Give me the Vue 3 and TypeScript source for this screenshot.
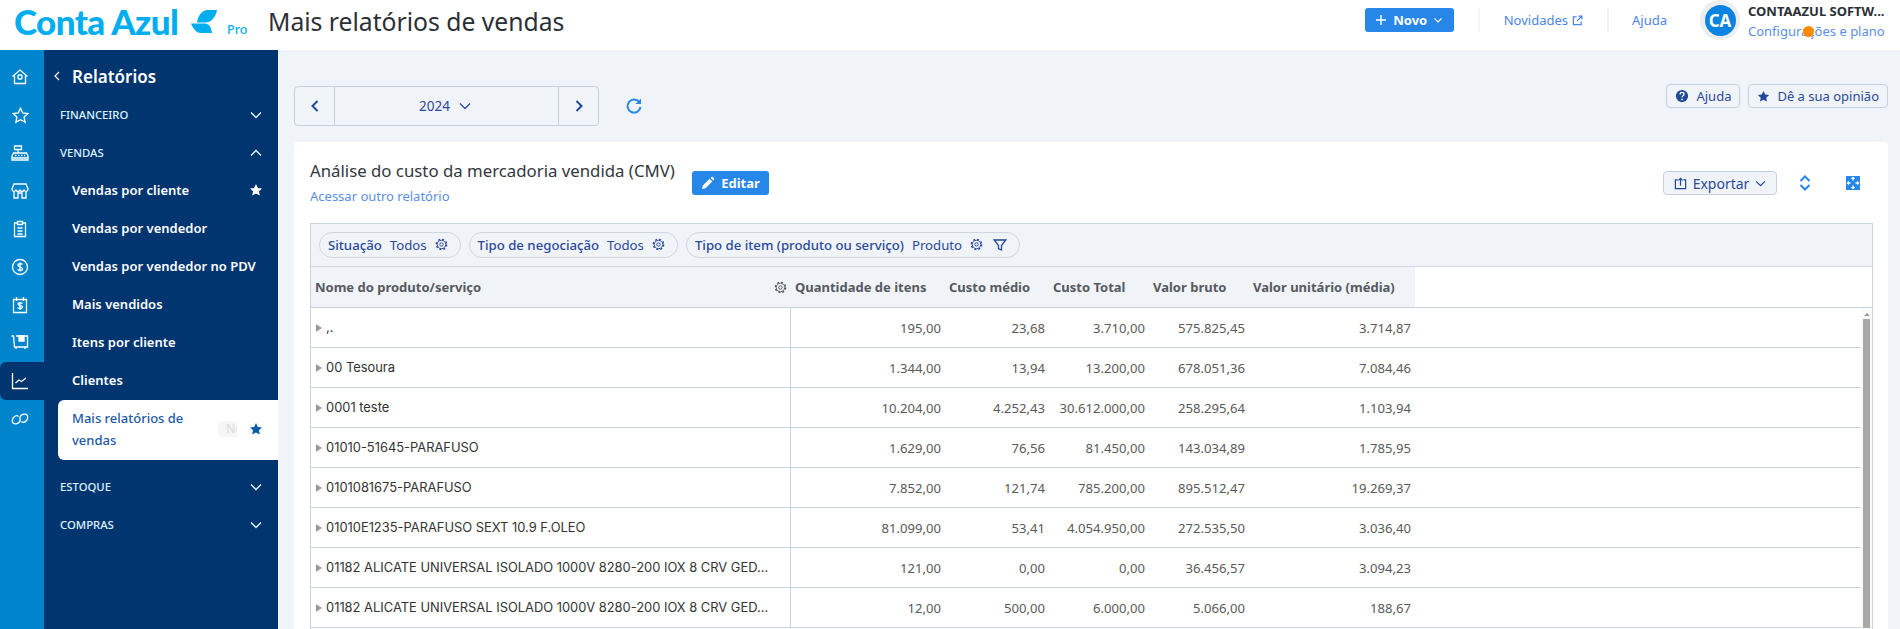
<script setup lang="ts">
import { ref } from 'vue'

interface Row { name: string; qty: string; cost: string; total: string; gross: string; unit: string }
const rows = ref<Row[]>([
  { name: ',.', qty: '195,00', cost: '23,68', total: '3.710,00', gross: '575.825,45', unit: '3.714,87' },
  { name: '00 Tesoura', qty: '1.344,00', cost: '13,94', total: '13.200,00', gross: '678.051,36', unit: '7.084,46' },
  { name: '0001 teste', qty: '10.204,00', cost: '4.252,43', total: '30.612.000,00', gross: '258.295,64', unit: '1.103,94' },
  { name: '01010-51645-PARAFUSO', qty: '1.629,00', cost: '76,56', total: '81.450,00', gross: '143.034,89', unit: '1.785,95' },
  { name: '0101081675-PARAFUSO', qty: '7.852,00', cost: '121,74', total: '785.200,00', gross: '895.512,47', unit: '19.269,37' },
  { name: '01010E1235-PARAFUSO SEXT 10.9 F.OLEO', qty: '81.099,00', cost: '53,41', total: '4.054.950,00', gross: '272.535,50', unit: '3.036,40' },
  { name: '01182 ALICATE UNIVERSAL ISOLADO 1000V 8280-200 IOX 8 CRV GED...', qty: '121,00', cost: '0,00', total: '0,00', gross: '36.456,57', unit: '3.094,23' },
  { name: '01182 ALICATE UNIVERSAL ISOLADO 1000V 8280-200 IOX 8 CRV GED...', qty: '12,00', cost: '500,00', total: '6.000,00', gross: '5.066,00', unit: '188,67' },
])
const subItems = ['Vendas por vendedor', 'Vendas por vendedor no PDV', 'Mais vendidos', 'Itens por cliente', 'Clientes']
const headers = ['Quantidade de itens', 'Custo médio', 'Custo Total', 'Valor bruto', 'Valor unitário (média)']
const star = 'M8 1.2l2.1 4.4 4.8.6-3.5 3.3.9 4.8L8 12l-4.3 2.3.9-4.8L1.1 6.2l4.8-.6z'
</script>

<template>
  <div class="page">
    <svg class="defs" width="0" height="0" aria-hidden="true">
      <symbol id="gear" viewBox="0 0 16 16">
        <circle cx="8" cy="8" r="5.2" fill="none" stroke="currentColor" stroke-width="1.2" />
        <circle cx="8" cy="8" r="2.1" fill="none" stroke="currentColor" stroke-width="1.2" />
        <circle cx="8" cy="8" r="6.4" fill="none" stroke="currentColor" stroke-width="1.6" stroke-dasharray="2.5 2.53" />
      </symbol>
    </svg>
    <header class="topbar">
      <div class="brand">
        <span class="logo-text">Conta Azul</span>
        <svg class="logo-mark" viewBox="0 0 26 24" width="26" height="24">
          <path d="M6 12.5C7 6 10.500 0 17 0h9c-1 6-5 12.500-12 12.500z" fill="#00aeef" />
          <path d="M0 13.500h14c4 0 6 3.500 7 9.500H10C5 23 2 18 0 13.500z" fill="#00aeef" />
        </svg>
        <span class="logo-pro">Pro</span>
      </div>
      <h1 class="page-title">Mais relatórios de vendas</h1>
      <div class="top-actions">
        <button class="btn-new">
          <svg viewBox="0 0 12 12" width="12" height="12"><path d="M6 1v10M1 6h10" stroke="#fff" stroke-width="1.4" fill="none" /></svg>
          <span>Novo</span>
          <svg viewBox="0 0 10 10" width="10" height="10"><path d="M1.500 3.500L5 7l3.500-3.500" stroke="#fff" stroke-width="1.2" fill="none" /></svg>
        </button>
        <i class="vline first"></i>
        <a class="top-link news">Novidades
          <svg viewBox="0 0 12 12" width="11" height="11"><path d="M5 2H1.500v8.500H10V7M7 1.200h3.800V5M10.500 1.500L5.500 6.500" stroke="#4a86e8" stroke-width="1.3" fill="none" /></svg>
        </a>
        <i class="vline second"></i>
        <a class="top-link help">Ajuda</a>
        <div class="avatar"><span>CA</span></div>
        <div class="account">
          <strong>CONTAAZUL SOFTW...</strong>
          <a>Configurações e plano</a>
          <i class="dot"></i>
        </div>
      </div>
    </header>

    <div class="body">
      <nav class="rail">
        <a class="rail-item"><svg viewBox="0 0 20 20" width="20" height="20"><path d="M2.500 9.500L10 3l7.500 6.500M4.500 8.500v8h11v-8" /><rect x="8" y="8" width="4" height="4" rx="1" /></svg></a>
        <a class="rail-item"><svg viewBox="0 0 16 16" width="17" height="17"><path :d="star" /></svg></a>
        <a class="rail-item"><svg viewBox="0 0 20 20" width="20" height="20"><path d="M3.500 10h13l1.500 3v4H2v-4zM4.500 3h7v3.500h-7zM8 6.500V10M5 12.500h1.500M8 12.500h1.500M11 12.500h1.500M14 12.500h1M2 15h16" /></svg></a>
        <a class="rail-item"><svg viewBox="0 0 20 20" width="20" height="20"><path d="M4 3h12l2 5c0 3-3 3-4 1-1 2-3 2-4 0-1 2-3 2-4 0-1 2-4 2-4-1zM4 10.500V17h4v-5h4v5h4v-6.500" /></svg></a>
        <a class="rail-item"><svg viewBox="0 0 20 20" width="20" height="20"><path d="M7.500 4H4.500v13.500h11V4h-3M7.500 2.500h5v3h-5zM7.500 9h5M7.500 12h5M7.500 15h5" /></svg></a>
        <a class="rail-item"><svg viewBox="0 0 20 20" width="20" height="20"><circle cx="10" cy="10" r="7.500" /><path d="M12.500 7.500c-.5-1-4.500-1.500-4.500.800s4.500 1.200 4.500 3.400-4 1.800-5 .6M10 5.500v9" /></svg></a>
        <a class="rail-item"><svg viewBox="0 0 20 20" width="20" height="20"><path d="M3.500 4.500h13v13h-13zM6.500 2v4M13.500 2v4M12.500 8.500c-.5-1-4.500-1.300-4.500.6s4.500 1 4.500 3-4 1.800-5 .6M10 7v8" /></svg></a>
        <a class="rail-item"><svg viewBox="0 0 20 20" width="20" height="20"><path d="M1.500 3h2l1 11h13V3H6M6 14v2M15 14v2" /><path class="solid" d="M9 3h5v5H9z" /></svg></a>
        <a class="rail-item active"><svg viewBox="0 0 20 20" width="20" height="20"><path d="M2.500 2v15.500H18M5.500 12l3.500-3 2.500 1.500 4.500-3.500" /></svg></a>
        <a class="rail-item"><svg viewBox="0 0 20 20" width="20" height="20"><path d="M8.500 7.500c-1-1-3-1-4.500.5s-2.500 4.500-1 6 4.500 1 6-.5 1.500-3 1-4M11.500 12.500c1 1 3 1 4.500-.5s2.500-4.500 1-6-4.500-1-6 .5-1.500 3-1 4" /></svg></a>
      </nav>

      <aside class="menu">
        <div class="menu-title">
          <svg viewBox="0 0 10 14" width="8" height="12"><path d="M7.500 2L2.500 7l5 5" stroke="#fff" stroke-width="1.5" fill="none" /></svg>
          <span>Relatórios</span>
        </div>
        <div class="group"><span>FINANCEIRO</span><svg class="chev" viewBox="0 0 12 8" width="12" height="8"><path d="M1 1.500l5 5 5-5" /></svg></div>
        <div class="group"><span>VENDAS</span><svg class="chev" viewBox="0 0 12 8" width="12" height="8"><path d="M1 6.500l5-5 5 5" /></svg></div>
        <div class="sub">
          <span>Vendas por cliente</span>
          <svg viewBox="0 0 16 16" width="14" height="14"><path :d="star" fill="#fff" /></svg>
        </div>
        <div v-for="item in subItems" :key="item" class="sub"><span>{{ item }}</span></div>
        <div class="sub current">
          <span class="current-label">Mais relatórios de vendas</span>
          <span class="badge"><span>Novo</span></span>
          <svg viewBox="0 0 16 16" width="14" height="14"><path :d="star" fill="#0a5ca8" /></svg>
        </div>
        <div class="group after-current"><span>ESTOQUE</span><svg class="chev" viewBox="0 0 12 8" width="12" height="8"><path d="M1 1.500l5 5 5-5" /></svg></div>
        <div class="group"><span>COMPRAS</span><svg class="chev" viewBox="0 0 12 8" width="12" height="8"><path d="M1 1.500l5 5 5-5" /></svg></div>
      </aside>

      <main class="content">
        <div class="toolbar">
          <div class="date-nav">
            <button class="dn-arrow"><svg viewBox="0 0 10 14" width="10" height="14"><path d="M7.500 2L2.500 7l5 5" /></svg></button>
            <div class="dn-year"><span>2024</span><svg viewBox="0 0 12 8" width="12" height="8"><path d="M1 1.500l5 5 5-5" fill="none" stroke="#2b4a9b" stroke-width="1.3" /></svg></div>
            <button class="dn-arrow"><svg viewBox="0 0 10 14" width="10" height="14"><path d="M2.500 2l5 5-5 5" /></svg></button>
          </div>
          <svg class="refresh" viewBox="0 0 18 18" width="18" height="18"><path d="M14.500 5.500A6.500 6.500 0 1 0 15.500 10" fill="none" stroke="#2687e9" stroke-width="2" /><path d="M16 1.500v5.500h-5.500z" fill="#2687e9" /></svg>
          <div class="tool-right">
            <button class="ghost">
              <svg viewBox="0 0 16 16" width="14" height="14"><circle cx="8" cy="8" r="7" fill="#1f4a9b" /><path d="M5.800 6.200c0-3 4.500-3 4.500-.2 0 1.700-2.300 1.600-2.300 3.500" fill="none" stroke="#fff" stroke-width="1.5" /><circle cx="8" cy="11.800" r="1" fill="#fff" /></svg>
              Ajuda
            </button>
            <button class="ghost">
              <svg viewBox="0 0 16 16" width="13" height="13"><path :d="star" fill="#1f4a9b" /></svg>
              Dê a sua opinião
            </button>
          </div>
        </div>

        <section class="card">
          <div class="card-head">
            <div class="card-titles">
              <h2>Análise do custo da mercadoria vendida (CMV)</h2>
              <a>Acessar outro relatório</a>
            </div>
            <button class="btn-edit">
              <svg viewBox="0 0 14 14" width="14" height="14"><path d="M1 13l.8-3.500L8.600 2.700l2.700 2.700-6.800 6.800zM9.500 1.800l.9-.8a1 1 0 0 1 1.400 0l1.200 1.200a1 1 0 0 1 0 1.400l-.8.9z" fill="#fff" /></svg>
              Editar
            </button>
            <div class="card-tools">
              <button class="ghost export">
                <svg viewBox="0 0 14 14" width="13" height="13"><path d="M4 3H1.500v9.500h11V3H10M7 9.500V1.500M4.800 3.700L7 1.500l2.200 2.200" fill="none" stroke="#1f4a9b" stroke-width="1.3" /></svg>
                Exportar
                <svg viewBox="0 0 12 8" width="11" height="7"><path d="M1 1.500l5 5 5-5" fill="none" stroke="#1f4a9b" stroke-width="1.3" /></svg>
              </button>
              <svg class="sort" viewBox="0 0 12 16" width="12" height="16"><path d="M1.500 6L6 1.500 10.500 6M1.500 10L6 14.500 10.500 10" fill="none" stroke="#2687e9" stroke-width="2" /></svg>
              <svg class="expand" viewBox="0 0 14 14" width="14" height="14"><rect width="14" height="14" fill="#2687e9" /><path d="M7 .5L9.200 3H4.800zM7 13.500L4.800 11h4.400zM.5 7L3 4.800v4.400zM13.500 7L11 9.200V4.800z" fill="#fff" /><path d="M7 3v1.500M7 9.500V11M3 7h1.500M9.500 7H11" stroke="#fff" stroke-width="1.300" /></svg>
            </div>
          </div>

          <div class="table">
            <div class="filters">
              <div class="chip c1">
                <b>Situação</b><span>Todos</span>
                <svg width="13" height="13"><use href="#gear" /></svg>
              </div>
              <div class="chip c2">
                <b>Tipo de negociação</b><span>Todos</span>
                <svg width="13" height="13"><use href="#gear" /></svg>
              </div>
              <div class="chip c3">
                <b>Tipo de item (produto ou serviço)</b><span>Produto</span>
                <svg width="13" height="13"><use href="#gear" /></svg>
                <svg class="funnel" viewBox="0 0 14 14" width="14" height="14"><path d="M1.200 2h11.600L8.500 7.500V12l-3-1.500v-3z" /></svg>
              </div>
            </div>
            <div class="thead">
              <div class="th name">
                <span>Nome do produto/serviço</span>
                <svg width="13" height="13"><use href="#gear" /></svg>
              </div>
              <div v-for="h in headers" :key="h" class="th">{{ h }}</div>
            </div>
            <div class="tbody">
              <div class="rows">
                <div v-for="(r, i) in rows" :key="i" class="tr">
                  <div class="td name"><i class="caret"></i><span>{{ r.name }}</span></div>
                  <div class="td num">{{ r.qty }}</div>
                  <div class="td num">{{ r.cost }}</div>
                  <div class="td num">{{ r.total }}</div>
                  <div class="td num">{{ r.gross }}</div>
                  <div class="td num">{{ r.unit }}</div>
                </div>
              </div>
              <div class="scrollbar"><i class="sb-up"></i><i class="sb-thumb"></i></div>
            </div>
          </div>
        </section>
      </main>
    </div>
  </div>
</template>

<style>
html, body { margin: 0; height: 629px; overflow: hidden; background: #f0f3f8; }
</style>

<style scoped>
* { box-sizing: border-box; }
.defs { position: absolute; }
.page { width: 1900px; height: 629px; overflow: hidden; display: flex; flex-direction: column; font-family: "Noto Sans", sans-serif; }
button { font-family: inherit; cursor: pointer; }
.topbar { height: 50px; flex: none; background: #fff; display: flex; align-items: center; }
.brand { display: flex; align-items: center; width: 268px; height: 24px; margin-top: -7px; padding-left: 14px; flex: none; }
.logo-text { font-family: "Lato", sans-serif; font-weight: 900; font-size: 35px; color: #00aeef; letter-spacing: -0.6px; line-height: 1; white-space: nowrap; width: 167px; flex: none; }
.logo-mark { margin-left: 10px; flex: none; }
.logo-pro { font-size: 12.5px; font-weight: 500; color: #00aeef; margin-left: 10px; margin-top: 16px; }
.page-title { margin: -8px 0 0; font-size: 24.7px; font-weight: 400; color: #2b2f36; white-space: nowrap; }
.top-actions { margin-left: auto; display: flex; align-items: center; height: 50px; padding-right: 12px; }
.btn-new { width: 89px; height: 24px; margin-bottom: 10px; border: 0; border-radius: 3px; background: #2687e9; color: #fff; font-weight: 700; font-size: 13px; display: flex; align-items: center; justify-content: center; gap: 6px; padding: 0; }
.vline { width: 2px; height: 24px; background: #f0f3f8; margin-bottom: 10px; }
.vline.first { margin-left: 24px; }
.vline.second { margin-left: 24px; }
.top-link { color: #4a86e8; font-size: 13px; margin-bottom: 10px; display: flex; align-items: center; gap: 4px; }
.news { margin-left: 24px; }
.help { margin-left: 23px; }
.avatar { width: 40px; height: 40px; margin: 0 8px 10px 33px; border-radius: 50%; background: #eeeeee; display: flex; align-items: center; justify-content: center; }
.avatar span { width: 31px; height: 31px; border-radius: 50%; background: #0a84e0; color: #fff; font-weight: 700; font-size: 17px; display: flex; align-items: center; justify-content: center; }
.account { position: relative; width: 140px; display: flex; flex-direction: column; gap: 2px; margin-bottom: 8px; }
.account strong { font-size: 13px; font-weight: 700; color: #2b2f36; white-space: nowrap; line-height: 18px; }
.account a { font-size: 13px; color: #5b8fe6; line-height: 18px; white-space: nowrap; }
.dot { position: absolute; left: 55px; top: 24px; width: 11px; height: 11px; border-radius: 50%; background: #ff8c00; }
.body { flex: 1; display: flex; min-height: 0; }
.rail { width: 44px; flex: none; background: #0085cc; padding-top: 8px; display: flex; flex-direction: column; }
.rail-item { height: 38px; display: flex; align-items: center; justify-content: center; padding-right: 4px; flex: none; }
.rail-item svg { fill: none; stroke: #fff; stroke-width: 1.3; }
.rail-item svg .solid { fill: #fff; }
.rail-item.active { background: #00356f; border-radius: 6px 0 0 6px; }
.menu { width: 234px; flex: none; background: #00356f; color: #fff; }
.menu-title { height: 46px; display: flex; align-items: center; gap: 11px; padding: 6px 0 0 9px; font-size: 17px; font-weight: 600; }
.group { height: 38px; display: flex; align-items: center; justify-content: space-between; padding: 0 16px 2px; font-size: 11.3px; font-weight: 500; color: #dff4ff; }
.group.after-current { margin-top: 8px; }
.chev { fill: none; stroke: #eaf8ff; stroke-width: 1.3; margin-top: 2px; }
.sub { height: 38px; display: flex; align-items: center; justify-content: space-between; margin-left: 14px; padding: 0 15px 2px 14px; font-size: 13px; font-weight: 600; color: #fff; white-space: nowrap; }
.current { height: 60px; background: #fff; color: #2358a6; border-radius: 6px 0 0 6px; font-weight: 500; justify-content: flex-start; padding-right: 15px; }
.current-label { width: 130px; line-height: 22px; white-space: normal; flex: none; }
.badge { width: 19px; height: 16px; background: #f6f6f6; border-radius: 3px 0 0 3px; overflow: hidden; color: #ddd; font-size: 12px; margin-left: 16px; line-height: 16px; padding-left: 8px; margin-right: 12px; flex: none; }
.content { flex: 1; min-width: 0; padding: 0 12px 0 16px; display: flex; flex-direction: column; }
.toolbar { height: 92px; flex: none; display: flex; align-items: flex-start; }
.date-nav { width: 305px; height: 40px; display: flex; border: 1px solid #c5d0de; border-radius: 4px; background: #f0f3f8; margin-top: 36px; }
.dn-arrow { width: 39px; border: 0; background: transparent; display: flex; align-items: center; justify-content: center; padding: 0; }
.dn-arrow svg { fill: none; stroke: #1f4a9b; stroke-width: 2; }
.dn-year { flex: 1; border-left: 1px solid #c5d0de; border-right: 1px solid #c5d0de; display: flex; align-items: center; justify-content: center; gap: 9px; color: #2b4a9b; font-size: 13.5px; padding-right: 3px; }
.refresh { margin-left: 26px; margin-top: 47px; }
.tool-right { margin-left: auto; display: flex; gap: 8px; margin-top: 34px; }
.ghost { height: 24px; display: flex; align-items: center; gap: 7px; border: 1px solid #c5d0de; border-radius: 4px; background: #f0f3f8; color: #2b4a9b; font-size: 13px; padding: 0 8px; white-space: nowrap; }
.card { flex: 1; background: #fff; border-radius: 4px 4px 0 0; padding: 0 15px 0 16px; min-height: 0; overflow: hidden; }
.card-head { height: 81px; display: flex; align-items: flex-start; }
.card-titles { padding-top: 17px; width: 382px; flex: none; }
.card-titles h2 { margin: 0; font-size: 16.8px; font-weight: 400; color: #33373d; line-height: 24px; white-space: nowrap; }
.card-titles a { display: block; font-size: 13px; color: #5b8fe6; line-height: 18px; margin-top: 4px; }
.btn-edit { margin-top: 29px; width: 77px; height: 24px; border: 0; border-radius: 3px; background: #2687e9; color: #fff; font-weight: 700; font-size: 13px; display: flex; align-items: center; justify-content: center; gap: 6px; padding: 0; }
.card-tools { margin-left: auto; display: flex; align-items: center; margin-top: 29px; height: 24px; }
.export { width: 114px; justify-content: center; font-size: 14px; gap: 6px; }
.sort { margin-left: 22px; }
.expand { margin-left: 35px; margin-right: 13px; }
.table { border: 1px solid #c8d3e0; border-bottom: 0; height: 420px; }
.filters { height: 43px; background: #f0f3f8; border-bottom: 1px solid #d0d7e0; display: flex; align-items: center; gap: 8px; padding: 0 0 1px 8px; }
.chip { height: 26px; border: 1px solid #ced6e0; border-radius: 13px; display: flex; align-items: center; padding: 0 12px 0 8px; font-size: 13.2px; color: #2b4a9b; white-space: nowrap; gap: 8px; }
.chip b { font-weight: 500; }
.chip svg { color: #2b4a9b; flex: none; }
.chip svg.funnel { fill: none; stroke: #1f4a9b; stroke-width: 1.3; margin-left: 2px; }
.thead { height: 41px; display: flex; border-bottom: 1px solid #c8d3e0; }
.th { height: 40px; background: #f0f3f8; display: flex; align-items: center; font-size: 13px; font-weight: 700; color: #555a60; white-space: nowrap; padding-left: 4px; }
.th.name { width: 480px; padding: 0 4px 0 4px; justify-content: space-between; }
.th.name svg { color: #555a60; }
.th:nth-child(2) { width: 154px; }
.th:nth-child(3) { width: 104px; }
.th:nth-child(4) { width: 100px; }
.th:nth-child(5) { width: 100px; }
.th:nth-child(6) { width: 166px; }
.tbody { display: flex; }
.rows { width: 1550px; flex: none; }
.tr { height: 40px; display: flex; border-bottom: 1px solid #c8d3e0; }
.td { display: flex; align-items: center; font-size: 13.1px; color: #5a5a5a; }
.td.name { width: 480px; padding-left: 5px; gap: 4px; border-right: 1px solid #c8d3e0; color: #333; white-space: nowrap; overflow: hidden; font-family: "Inter", sans-serif; font-size: 12.9px; }
.td.num { justify-content: flex-end; padding-right: 4px; }
.td:nth-child(2) { width: 154px; }
.td:nth-child(3) { width: 104px; }
.td:nth-child(4) { width: 100px; }
.td:nth-child(5) { width: 100px; }
.td:nth-child(6) { width: 166px; }
.caret { width: 0; height: 0; border-left: 6px solid #999; border-top: 4px solid transparent; border-bottom: 4px solid transparent; flex: none; }
.scrollbar { flex: 1; position: relative; background: #fafafa; height: 320px; }
.sb-up { position: absolute; left: 3px; top: 5px; width: 0; height: 0; border-bottom: 3px solid #999; border-left: 3px solid transparent; border-right: 3px solid transparent; }
.sb-thumb { position: absolute; left: 2px; right: 2px; top: 11px; bottom: 0; background: #a8a8a8; }
</style>
